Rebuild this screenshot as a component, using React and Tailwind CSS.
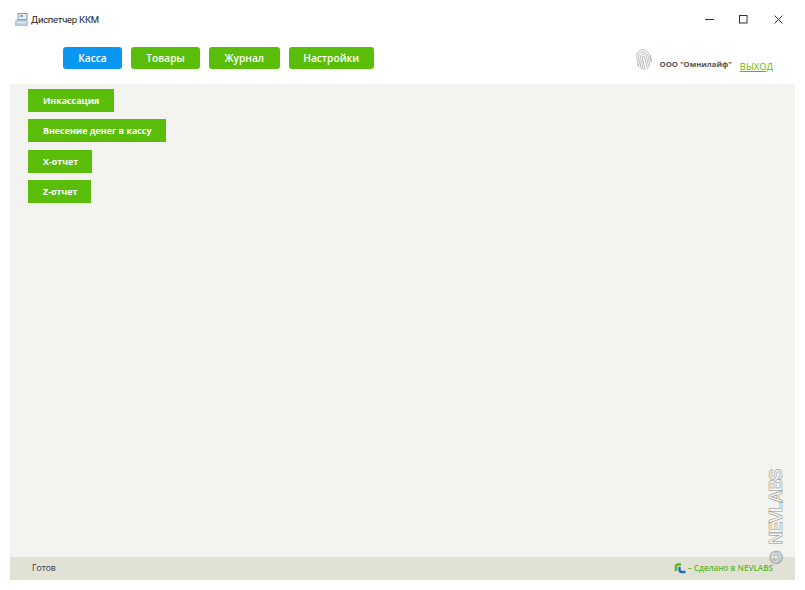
function WindowControls() {
  return (
    <div className="flex items-center text-[#333]">
      <svg width="9" height="9" viewBox="0 0 9 9" className="mr-[25px]">
        <path d="M0 4.500h9" stroke="currentColor" fill="none" />
      </svg>
      <svg width="9" height="9" viewBox="0 0 9 9" className="mr-[26px]">
        <rect x="0.500" y="0.500" width="7.500" height="7.500" stroke="currentColor" fill="none" />
      </svg>
      <svg width="9" height="9" viewBox="0 0 9 9" className="mr-[22px]">
        <path d="M.5.5l8 8M8.500.5l-8 8" stroke="currentColor" fill="none" />
      </svg>
    </div>
  )
}

function AppIcon() {
  return (
    <svg width="13" height="13" viewBox="0 0 13 13">
      <rect x="3" y="0.500" width="9" height="6" fill="#e8edf2" stroke="#8a97a3" />
      <rect x="5" y="2" width="3" height="2" fill="#7fa9cb" />
      <path d="M1 7h11l1 5.500H0z" fill="#b4cade" stroke="#9ab0c5" strokeWidth="0.600" />
      <rect x="2" y="8.500" width="9" height="2" fill="#dbe6f0" />
    </svg>
  )
}

function FingerprintIcon() {
  return (
    <svg width="18" height="24" viewBox="0 0 18 24" fill="none" stroke="#a8a8a8" strokeWidth="0.700">
      <g transform="rotate(-14 9 12)">
        <path d="M2.500 18V9a6.500 7.500 0 0 1 13 0v7" />
        <path d="M4.300 20V9.500a4.700 5.800 0 0 1 9.400 0v9" />
        <path d="M6 21.500V9.800a3 4 0 0 1 6 0v10.500" />
        <path d="M7.700 22V10a1.300 2 0 0 1 2.600 0v11.500" />
        <path d="M1.800 14v2.500M16.200 9v6" />
      </g>
    </svg>
  )
}

function NevlabsIcon() {
  return (
    <svg width="12" height="11" viewBox="0 0 12 11" fill="none">
      <path d="M2 8V3.500a2 2 0 0 1 2-2h3" stroke="#5cb82e" strokeWidth="2.600" />
      <path d="M5.500 4v2.500a2.500 2.500 0 0 0 2.500 2.500H11.500" stroke="#1f6fb5" strokeWidth="2.400" />
    </svg>
  )
}

const navItems = [
  { label: 'Касса', width: 'w-[59px]', color: 'bg-[#0a97f1]' },
  { label: 'Товары', width: 'w-[69px]', color: 'bg-[#59bd09]' },
  { label: 'Журнал', width: 'w-[70.5px]', color: 'bg-[#59bd09]' },
  { label: 'Настройки', width: 'w-[85.5px]', color: 'bg-[#59bd09]' },
]

const actions = [
  { label: 'Инкассация', width: 'w-[86px]' },
  { label: 'Внесение денег в кассу', width: 'w-[138px]' },
  { label: 'X-отчет', width: 'w-[64px]' },
  { label: 'Z-отчет', width: 'w-[63px]' },
]

export default function App() {
  return (
    <div className="relative flex h-[590px] w-[805px] flex-col overflow-hidden bg-white font-['Open_Sans',sans-serif]">
      <div className="flex h-[38px] shrink-0 items-center justify-between pl-[15px] pt-[1px]">
        <div className="flex items-center gap-[3px] font-['Roboto',sans-serif] text-[9.5px] tracking-[-0.25px] text-[#222]">
          <AppIcon />
          <span className="mt-[1px]">Диспетчер ККМ</span>
        </div>
        <WindowControls />
      </div>

      <div className="flex h-[46px] shrink-0 items-start justify-between pl-[63px]">
        <div className="mt-[9px] flex gap-[9px]">
          {navItems.map((item) => (
            <button
              key={item.label}
              className={`h-[22px] rounded-[3px] pt-[1px] text-center text-[10.2px] font-semibold text-white ${item.width} ${item.color}`}
            >
              {item.label}
            </button>
          ))}
        </div>
        <div className="mr-[32px] mt-[7px] flex items-center">
          <FingerprintIcon />
          <span className="ml-[7px] mt-[11px] text-[7.7px] font-bold text-[#555]">ООО "Омнилайф"</span>
          <a className="ml-[8px] mt-[15px] text-[9.4px] text-[#59bd09] underline">ВЫХОД</a>
        </div>
      </div>

      <div className="ml-[10px] mr-[10px] flex flex-1 flex-col items-start gap-[7.5px] bg-[#f3f3ef] pl-[18px] pt-[4.5px]">
        {actions.map((action) => (
          <button
            key={action.label}
            className={`h-[23px] bg-[#59bd09] pl-[15px] pt-[1px] text-left text-[8.9px] font-bold text-white ${action.width}`}
          >
            {action.label}
          </button>
        ))}
      </div>

      <div className="mx-[10px] mb-[10px] flex h-[23px] shrink-0 items-center justify-between bg-[#e2e1d6] pl-[22px] pr-[22px]">
        <span className="text-[8.6px] text-[#333]">Готов</span>
        <span className="flex items-center gap-[2px] text-[8.1px] font-semibold text-[#5cb82e]">
          <NevlabsIcon />
          – Сделано в NEVLABS
        </span>
      </div>

      <div className="absolute bottom-[23px] right-[20px] rotate-180 font-['Liberation_Sans',sans-serif] text-[18px] font-bold leading-none tracking-[-1.6px] text-[#f3f3ef] [-webkit-text-stroke:0.5px_#8c8c8c] [writing-mode:vertical-rl]">
        © NEVLABS
      </div>
    </div>
  )
}
